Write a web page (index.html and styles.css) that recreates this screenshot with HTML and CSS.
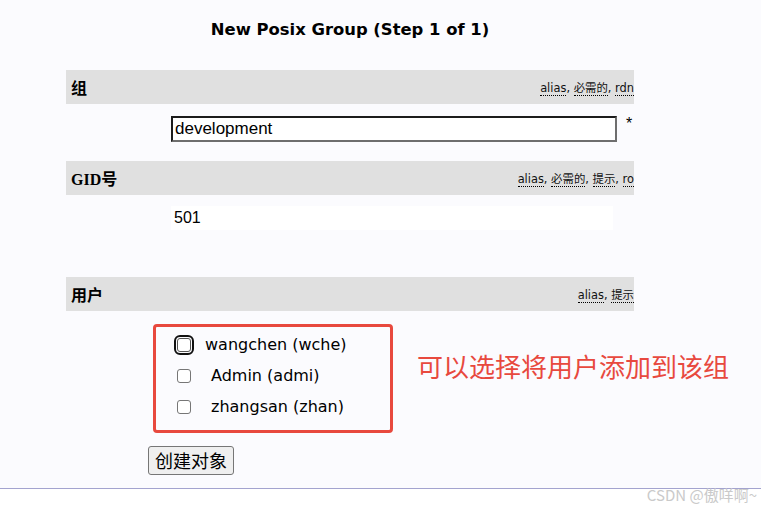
FILE: index.html
```html
<!DOCTYPE html>
<html lang="zh-CN">
<head>
<meta charset="utf-8">
<title>New Posix Group</title>
<link rel="stylesheet" href="styles.css">
</head>
<body>
<div class="page">
  <div class="form">
    <h1 class="title">New Posix Group (Step 1 of 1)</h1>

    <div class="bar">
      <span class="bar-label">组</span>
      <span class="bar-meta"><span class="abbr">alias</span>, <span class="abbr">必需的</span>, <span class="abbr">rdn</span></span>
    </div>
    <div class="value-row value-row-input">
      <input class="text-input" type="text" value="development">
      <span class="required">*</span>
    </div>

    <div class="bar">
      <span class="bar-label">GID号</span>
      <span class="bar-meta"><span class="abbr">alias</span>, <span class="abbr">必需的</span>, <span class="abbr">提示</span>, <span class="abbr">ro</span></span>
    </div>
    <div class="value-row value-row-static">
      <div class="static-value">501</div>
    </div>

    <div class="bar">
      <span class="bar-label">用户</span>
      <span class="bar-meta"><span class="abbr">alias</span>, <span class="abbr">提示</span></span>
    </div>
    <div class="users-row">
      <div class="user-list">
        <label class="user"><span class="check focused"></span><span class="user-name">wangchen (wche)</span></label>
        <label class="user"><span class="check"></span><span class="user-name indent">Admin (admi)</span></label>
        <label class="user"><span class="check"></span><span class="user-name indent">zhangsan (zhan)</span></label>
      </div>
      <div class="note">可以选择将用户添加到该组</div>
    </div>

    <div class="actions">
      <button class="submit" type="button">创建对象</button>
    </div>
  </div>
</div>
<div class="watermark">CSDN @傲咩啊~</div>
</body>
</html>
```

FILE: styles.css
```css
html, body {
  margin: 0;
  padding: 0;
  background: #ffffff;
}

body {
  font-family: "DejaVu Sans", "Noto Sans CJK SC", sans-serif;
  color: #000;
  position: relative;
  height: 508px;
  overflow: hidden;
}

.page {
  height: 488px;
  background: #fbfbfe;
  border-bottom: 1px solid #a3a3cf;
}

.form {
  width: 568px;
  margin-left: 66px;
}

.title {
  margin: 0;
  height: 70px;
  box-sizing: border-box;
  padding-top: 20px;
  font-size: 16.4px;
  line-height: 20px;
  font-weight: bold;
  text-align: center;
  font-family: "DejaVu Sans", "Noto Sans CJK SC", sans-serif;
}

.bar {
  height: 34px;
  background: #e0e0e0;
  display: flex;
  align-items: center;
  justify-content: space-between;
  padding-left: 5px;
  overflow: hidden;
}

.bar-label {
  font-family: "Liberation Serif", "Noto Sans CJK SC", serif;
  font-weight: bold;
  font-size: 16px;
}

.bar-meta {
  font-size: 11.4px;
  font-family: "DejaVu Sans", "Noto Sans CJK SC", sans-serif;
  white-space: nowrap;
  color: #111;
  padding-bottom: 1px;
}

.abbr {
  border-bottom: 1px dotted #000;
}

.value-row {
  padding-left: 105px;
  display: flex;
  align-items: flex-start;
}

.value-row-input {
  padding-top: 12px;
  padding-bottom: 19px;
}

.text-input {
  width: 446px;
  height: 26px;
  box-sizing: border-box;
  margin: 0;
  padding: 0 2px;
  border: 2px solid;
  border-color: #1c1c1c #6e6e6e #6e6e6e #1c1c1c;
  background: #fff;
  font-family: "Liberation Sans", sans-serif;
  font-size: 17px;
  color: #000;
  outline: none;
}

.required {
  margin-left: 9px;
  font-family: "Liberation Sans", sans-serif;
  font-size: 16px;
  line-height: 16px;
}

.value-row-static {
  padding-top: 11px;
  height: 71px;
  box-sizing: content-box;
}

.static-value {
  width: 442px;
  height: 24px;
  box-sizing: border-box;
  background: #fff;
  padding-left: 3px;
  font-family: "Liberation Sans", sans-serif;
  font-size: 16px;
  line-height: 24px;
}

.users-row {
  display: flex;
  align-items: flex-start;
  margin-top: 13px;
  margin-left: 87px;
}

.user-list {
  flex: none;
  width: 240px;
  height: 109px;
  box-sizing: border-box;
  border: 3px solid #e8493e;
  border-radius: 4px;
  padding-top: 2px;
}

.user {
  display: flex;
  align-items: center;
  height: 31px;
  padding-left: 21px;
  white-space: nowrap;
}

.check {
  width: 14px;
  height: 14px;
  box-sizing: border-box;
  border: 1px solid #767676;
  border-radius: 3px;
  background: #fff;
  flex: none;
}

.check.focused {
  border-color: #555;
  outline: 2px solid #111;
  outline-offset: 1px;
}

.user-name {
  margin-left: 14px;
  font-size: 16px;
  font-family: "DejaVu Sans", sans-serif;
}

.user-name.indent {
  margin-left: 20px;
}

.note {
  flex: none;
  margin-left: 24px;
  margin-top: 25px;
  font-family: "Noto Sans CJK SC", sans-serif;
  font-size: 26px;
  line-height: 34px;
  color: #e8493e;
  white-space: nowrap;
}

.actions {
  margin-top: 13px;
  margin-left: 82px;
}

.submit {
  margin: 0;
  height: 29px;
  padding: 0 6px;
  border: 1px solid #767676;
  border-radius: 3px;
  background: #efefef;
  font-family: "Noto Sans CJK SC", sans-serif;
  font-size: 18px;
  line-height: 21px;
  color: #000;
}

.watermark {
  position: absolute;
  right: 4px;
  top: 484px;
  font-family: "Noto Sans CJK SC", sans-serif;
  font-size: 15px;
  color: #cacaca;
  white-space: nowrap;
}
```
